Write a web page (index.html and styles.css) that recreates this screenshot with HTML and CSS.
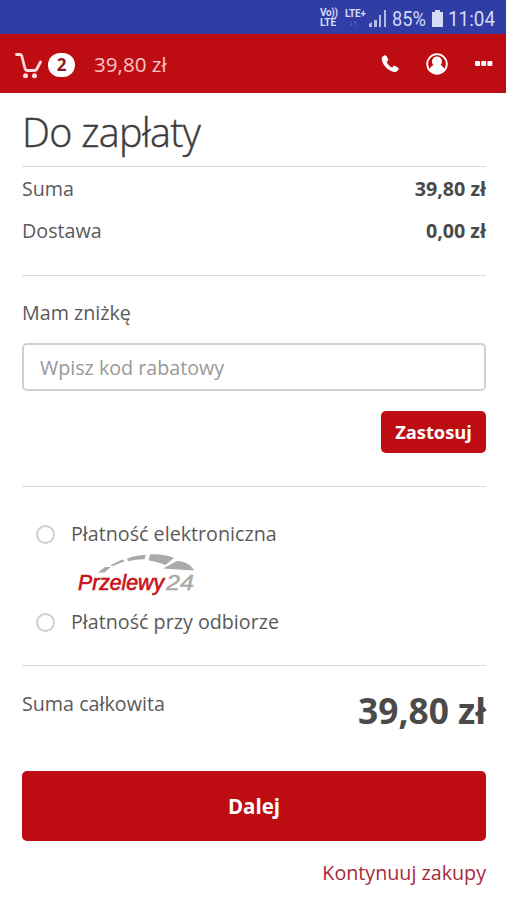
FILE: index.html
```
<!DOCTYPE html>
<html lang="pl">
<head>
    <meta charset="UTF-8">
    <meta name="viewport" content="width=device-width, initial-scale=1.0">
    <title>Do zapłaty</title>
    <link rel="stylesheet" href="styles.css">
</head>
<body>
    <div class="status-bar">
        <svg width="186" height="34" viewBox="0 0 186 34">
            <g class="network">
                <text x="0" y="16" textLength="18">Vo))</text>
                <text x="0" y="26" textLength="16">LTE</text>
                <text x="25" y="17" textLength="21">LTE+</text>
                <text class="arrows" x="29" y="26">↓↑</text>
            </g>
            <path d="M49 27v-3l3-2v5zM54 27v-7h3v7zM59 27V15h2v12zM64 27V10h2v17z" opacity=".8"/>
            <text x="72" y="26" textLength="34" lengthAdjust="spacingAndGlyphs">85%</text>
            <path d="M115 10h5v2h3v15h-11V12h3z"/>
            <text x="128" y="26" textLength="47" lengthAdjust="spacingAndGlyphs">11:04</text>
        </svg>
    </div>

    <header class="top-bar">
        <svg class="cart" width="28" height="28" viewBox="0 0 28 28">
            <path d="M1.500 2.500h3.500c1 0 1.500.5 1.800 1.500L10 16.500c.5 1.500 1 2 2.500 2h7c1.200 0 1.800-.5 2.300-1.500L25.500 10" fill="none" stroke="currentColor" stroke-width="2.800" stroke-linejoin="round" stroke-linecap="round"/>
            <circle cx="10.500" cy="23.800" r="2.500"/>
            <circle cx="19.500" cy="23.800" r="2.500"/>
        </svg>
        <span class="badge">2</span>
        <span class="cart-total">39,80 zł</span>
        <nav class="actions">
            <svg width="18" height="18" viewBox="0 0 18 18">
                <path d="M3.600.6 1.200 2.200C-.3 8 8 17.500 15.300 16.700l2-2.400c.4-.6.2-1-.3-1.400l-3.300-1.800c-.6-.3-1-.1-1.400.3l-1.200 1.500C8.800 12 6.300 9.300 5.400 7l1.200-1.300c.4-.4.5-.8.3-1.400L5.200 1.100C4.800.5 4.200.3 3.600.6z" stroke="currentColor" stroke-width=".6"/>
            </svg>
            <svg width="24" height="24" viewBox="0 0 24 24">
                <circle cx="12" cy="12" r="9.800" fill="none" stroke="currentColor" stroke-width="1.800"/>
                <circle cx="12" cy="9.600" r="5"/>
                <path d="M4.600 18c.4-2.800 2.200-4.500 4.600-5h5.600c2.400.5 4.200 2.200 4.600 5-4 4.800-10.800 4.800-14.800 0z"/>
            </svg>
            <svg width="18" height="6" viewBox="0 0 18 6">
                <rect width="5" height="5" x="0" y="0" rx="1"/>
                <rect width="5" height="5" x="6.200" y="0" rx="1"/>
                <rect width="5" height="5" x="12.400" y="0" rx="1"/>
            </svg>
        </nav>
    </header>

    <main class="checkout">
        <h1>Do zapłaty</h1>

        <section class="summary">
            <div class="row"><span>Suma</span><b>39,80 zł</b></div>
            <div class="row"><span>Dostawa</span><b>0,00 zł</b></div>
        </section>

        <section class="discount">
            <label for="code">Mam zniżkę</label>
            <input id="code" type="text" placeholder="Wpisz kod rabatowy">
            <button class="apply">Zastosuj</button>
        </section>

        <section class="payment">
            <label class="option"><input type="radio" name="payment">Płatność elektroniczna</label>
            <svg class="p24" width="122" height="44" viewBox="0 0 122 44">
                <g fill="#aaa">
                    <path d="M22 19.500l7-5.500h6l-6.500 5.500z"/>
                    <path d="M34 12.500 46 6.500l3 1.500-12 5z"/>
                    <path d="M51 5.500c6-2.200 12-3.500 19-3.800l-1.500 4.500C62 6.300 58 7 52 8.300z"/>
                    <path d="M74 1.500c9-.6 17 .7 24 3.500l-8.500 7c-6-2-11-3.700-17-4.700z"/>
                    <path d="M101 8c9 .5 14 4 17 9.500L87 15.500z"/>
                </g>
                <text class="p24-name" x="2" y="37">
                    <tspan textLength="86" lengthAdjust="spacingAndGlyphs">Przelewy</tspan>
                </text>
                <text class="p24-number" x="90" y="37" textLength="28" lengthAdjust="spacingAndGlyphs">24</text>
            </svg>
            <label class="option"><input type="radio" name="payment">Płatność przy odbiorze</label>
        </section>

        <section class="total">
            <span>Suma całkowita</span>
            <b>39,80 zł</b>
        </section>

        <button class="next">Dalej</button>
        <a class="back" href="#">Kontynuuj zakupy</a>
    </main>
</body>
</html>
```
FILE: styles.css
```
* {
    box-sizing: border-box;
}

body {
    margin: 0;
    font-family: "Open Sans", sans-serif;
    font-size: 19.7px;
    line-height: 28px;
    color: #5a5a5a;
    background: #fff;
}

svg {
    display: block;
    flex: none;
    fill: currentColor;
}

.status-bar {
    display: flex;
    justify-content: flex-end;
    height: 34px;
    color: #d5daf6;
    background: #303da5;
    font-family: Roboto, sans-serif;
    font-size: 20px;
}

.network {
    font-size: 10px;
    font-weight: bold;
}

.arrows {
    font-size: 8px;
    opacity: 0.5;
}

.top-bar {
    display: flex;
    align-items: center;
    height: 59px;
    padding: 0 13px 0 15px;
    color: #fff;
    background: #be0c13;
}

.cart {
    margin-top: 4px;
    color: #fbd9dc;
}

.badge {
    width: 27px;
    height: 24px;
    margin: 2px 0 0 5px;
    border-radius: 12px;
    background: #fff;
    color: #8e1820;
    font-size: 17px;
    font-weight: bold;
    line-height: 24px;
    text-align: center;
}

.cart-total {
    margin-left: 19px;
    color: #f9c5c5;
    font-size: 20.6px;
}

.actions {
    display: flex;
    align-items: center;
    gap: 26px;
    margin-left: auto;
}

.checkout {
    display: flex;
    flex-direction: column;
    padding: 0 20px 0 22px;
}

h1 {
    height: 74px;
    margin: 0;
    padding-top: 12px;
    border-bottom: 1px solid #dcdcdc;
    color: #3c3c3c;
    font-size: 39.5px;
    font-weight: 300;
    letter-spacing: -0.7px;
    line-height: 54px;
    -webkit-text-stroke: 0.4px #3c3c3c;
}

.summary {
    height: 109px;
    padding-top: 1px;
    border-bottom: 1px solid #dcdcdc;
}

.row {
    display: flex;
    justify-content: space-between;
    align-items: center;
    height: 42px;
}

.row b {
    color: #4a4a4a;
}

.discount {
    display: flex;
    flex-direction: column;
    height: 211px;
    padding-top: 23px;
    border-bottom: 1px solid #dcdcdc;
}

.discount input {
    height: 48px;
    margin-top: 16px;
    padding: 0 16px;
    border: 2px solid #d0d0d0;
    border-radius: 5px;
    font: inherit;
}

.discount input::placeholder {
    color: #999;
}

button {
    padding: 0;
    border: none;
    border-radius: 5px;
    background: #be0c13;
    color: #fff;
    font: inherit;
    font-weight: bold;
}

.apply {
    align-self: flex-end;
    width: 105px;
    height: 42px;
    margin-top: 20px;
    font-size: 18.300px;
}

.payment {
    height: 179px;
    padding: 33px 0 0 14px;
    border-bottom: 1px solid #dcdcdc;
}

.option {
    display: flex;
    align-items: center;
    height: 28px;
}

.option input {
    appearance: none;
    width: 19px;
    height: 19px;
    margin: 0 16px 0 0;
    border: 2px solid #d0d0d0;
    border-radius: 50%;
}

.p24 {
    margin: 5px 0 11px 40px;
}

.p24-name {
    fill: #c9141c;
    stroke: #c9141c;
    stroke-width: 0.7;
    font: italic 22px "Liberation Sans", sans-serif;
}

.p24-number {
    fill: #aaa;
    stroke: #aaa;
    stroke-width: 0.4;
    font: italic 22px "Liberation Sans", sans-serif;
}

.total {
    display: flex;
    justify-content: space-between;
    height: 105px;
    padding-top: 24px;
}

.total b {
    margin-top: 6px;
    color: #4a4a4a;
    font-size: 35.300px;
}

.next {
    height: 70px;
    font-size: 20.5px;
}

.back {
    align-self: flex-end;
    margin-top: 18px;
    color: #a62a3a;
    text-decoration: none;
}
```
